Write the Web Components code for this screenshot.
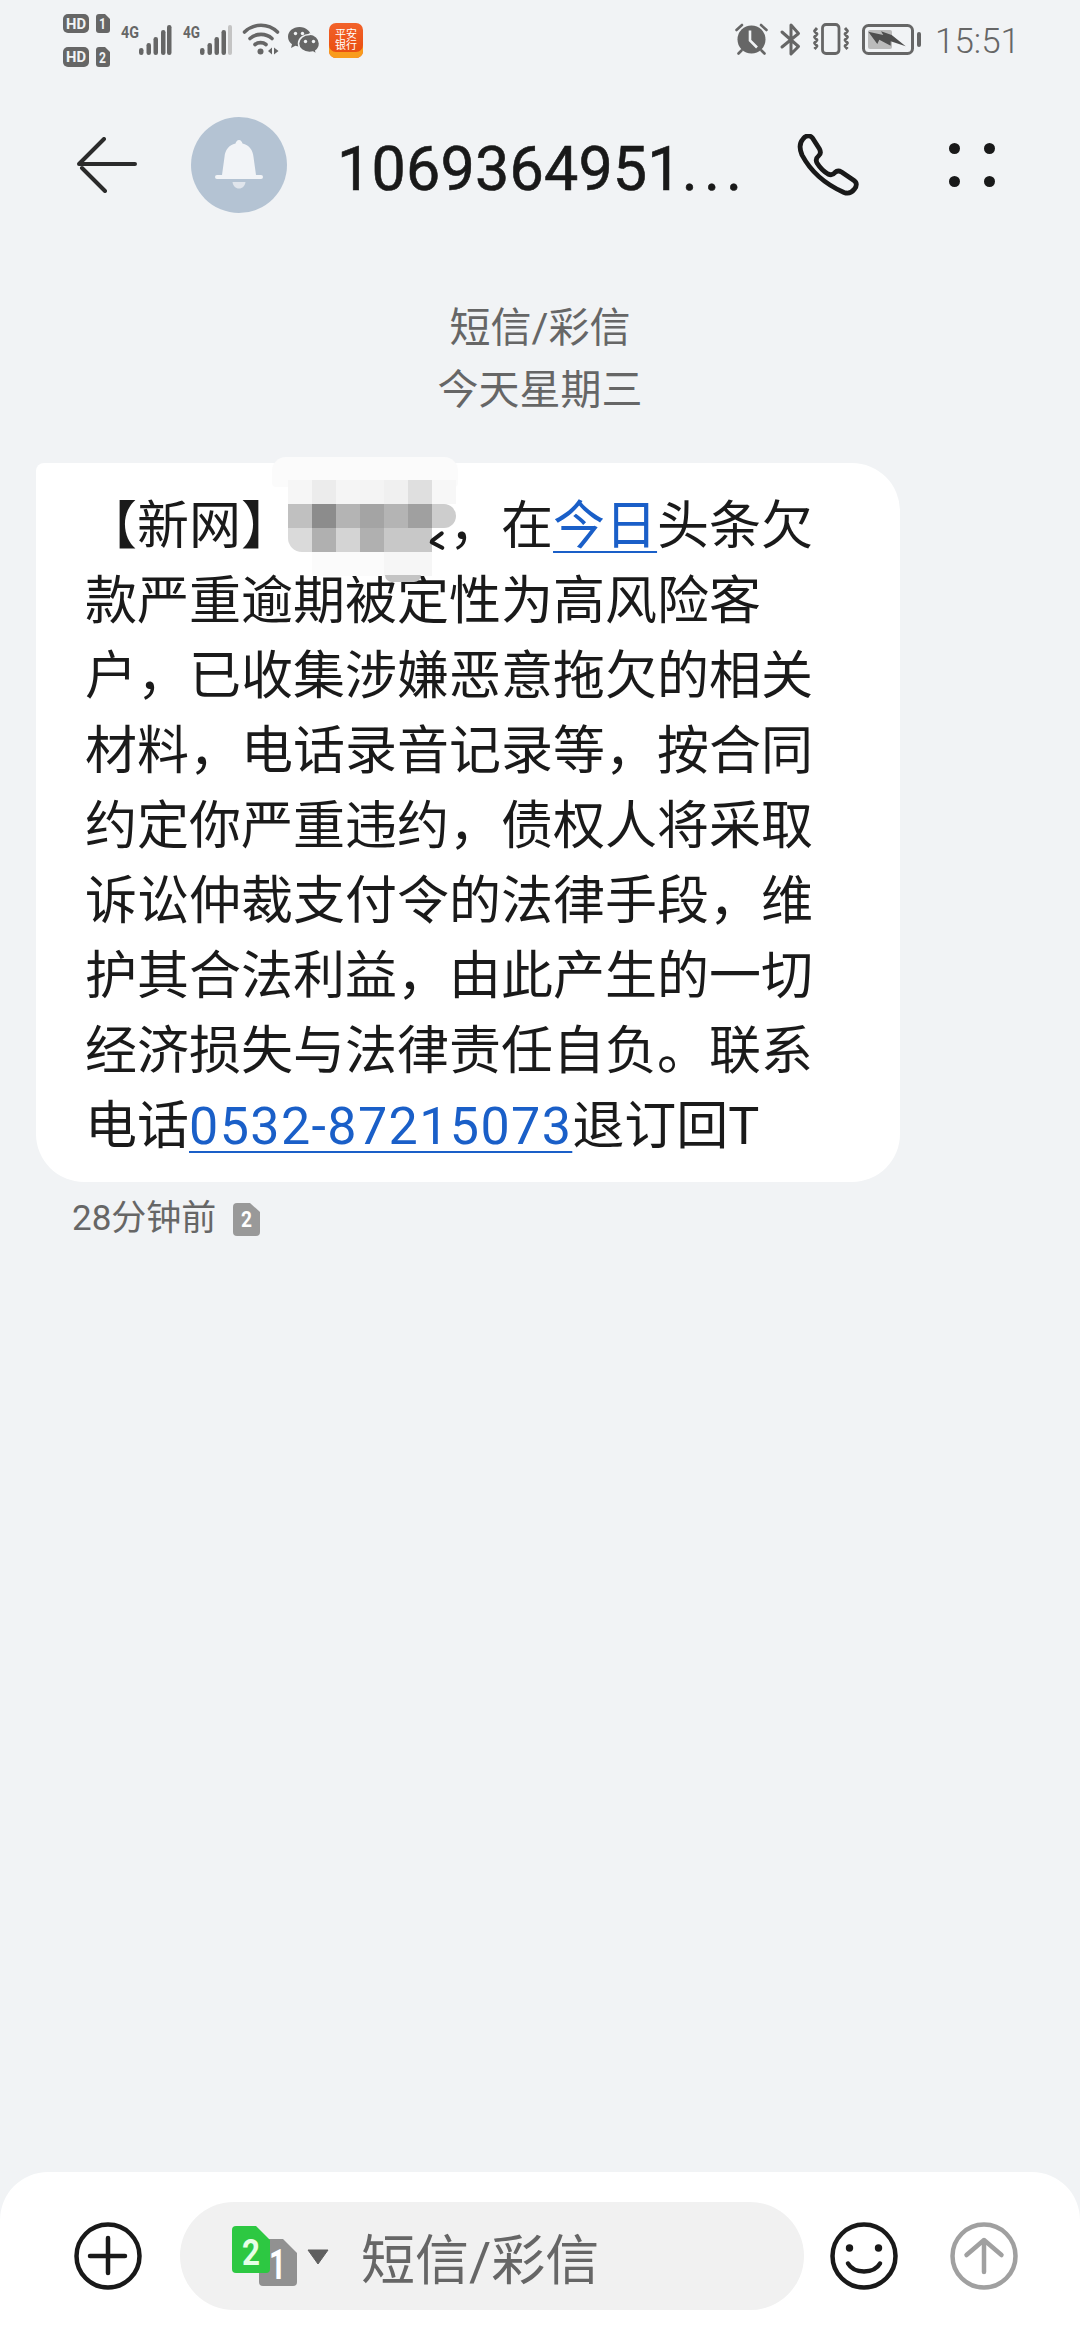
<!DOCTYPE html>
<html lang="zh-CN">
<head>
<meta charset="utf-8">
<title>短信</title>
<style>
  html, body { margin: 0; padding: 0; background: #f1f3f5; }
</style>
</head>
<body>

<template id="sms-app">
  <style>
    :host {
      display: flex;
      flex-direction: column;
      width: 1080px;
      height: 2340px;
      overflow: hidden;
      background: #f1f3f5;
      font-family: Roboto, "Noto Sans CJK SC", sans-serif;
    }
    .thread {
      flex: 1;
      display: flex;
      flex-direction: column;
      padding: 49px 36px 0;
    }
  </style>
  <slot name="top"></slot>
  <div class="thread"><slot></slot></div>
  <slot name="bottom"></slot>
</template>

<template id="sms-status-bar">
  <style>
    :host {
      display: flex;
      align-items: flex-start;
      justify-content: space-between;
      height: 82px;
      padding: 14px 60px 0 63px;
      box-sizing: border-box;
      color: #666;
    }
    .group { display: flex; align-items: flex-start; }
    svg { display: block; flex: none; overflow: visible; }
    svg text { font-family: Roboto, sans-serif; font-weight: 700; fill: #666; }
    .hd text { fill: #f1f3f5; }
    .signal { margin-left: 11px; margin-top: 10px; }
    .wifi { margin-left: 11px; margin-top: 8px; }
    .wechat { margin-left: 9px; margin-top: 13px; }
    .bank {
      width: 34px;
      height: 35px;
      margin-left: 9px;
      margin-top: 9px;
      padding: 5px 6px 0;
      border-radius: 7px;
      background: linear-gradient(#f2622a, #ea4f12 80%);
      box-shadow: inset 0 -6px 0 #f99c1c;
      color: #fff;
      font: 11px/11px "Noto Sans CJK SC", sans-serif;
      text-align: center;
      box-sizing: border-box;
    }
    .time {
      margin-left: 14px;
      margin-top: 8px;
      font: 300 35px/40px Roboto, sans-serif;
      color: #666;
    }
    .alarm { margin-top: 9px; }
    .bt { margin-left: 12px; margin-top: 9px; }
    .vib { margin-left: 11px; margin-top: 9px; }
    .batt { margin-left: 12px; margin-top: 10px; }
  </style>
  <div class="group">
    <svg class="hd" width="47" height="53" viewBox="0 0 47 53">
      <rect x="0" y="0" width="26" height="19" rx="5" fill="#666"/>
      <text x="3" y="15" font-size="15" textLength="20" lengthAdjust="spacingAndGlyphs">HD</text>
      <path d="M36 0h6l5 5v11q0 3-3 3h-8q-3 0-3-3V3q0-3 3-3z" fill="#666"/>
      <text x="36" y="15" font-size="14" textLength="7" lengthAdjust="spacingAndGlyphs">1</text>
      <rect x="0" y="33" width="26" height="20" rx="5" fill="#666"/>
      <text x="3" y="48" font-size="15" textLength="20" lengthAdjust="spacingAndGlyphs">HD</text>
      <path d="M36 33h6l5 5v12q0 3-3 3h-8q-3 0-3-3V36q0-3 3-3z" fill="#666"/>
      <text x="36" y="49" font-size="14" textLength="7" lengthAdjust="spacingAndGlyphs">2</text>
    </svg>
    <svg class="signal" width="50" height="32" viewBox="0 0 50 32">
      <text x="0" y="14" font-size="17" textLength="18" lengthAdjust="spacingAndGlyphs">4G</text>
      <rect x="18" y="24" width="4.5" height="7" rx="2.2" fill="#666"/>
      <rect x="25.5" y="19" width="4.5" height="12" rx="2.2" fill="#666"/>
      <rect x="32.5" y="13" width="4.5" height="18" rx="2.2" fill="#666"/>
      <rect x="40" y="6" width="4.5" height="25" rx="2.2" fill="#666"/>
      <rect x="46" y="1" width="4.5" height="30" rx="2.2" fill="#666"/>
    </svg>
    <svg class="signal" style="margin-left:12px" width="49" height="32" viewBox="0 0 49 32">
      <text x="0" y="14" font-size="17" textLength="17" lengthAdjust="spacingAndGlyphs">4G</text>
      <rect x="17" y="24" width="4.5" height="7" rx="2.2" fill="#666"/>
      <rect x="24.5" y="19" width="4.5" height="12" rx="2.2" fill="#666"/>
      <rect x="31.5" y="13" width="4.5" height="18" rx="2.2" fill="#666"/>
      <rect x="38.5" y="6" width="4.5" height="25" rx="2.2" fill="#666"/>
      <rect x="45" y="1" width="4" height="30" rx="2" fill="#c4c4c4"/>
    </svg>
    <svg class="wifi" width="36" height="33" viewBox="0 0 36 33" fill="none" stroke="#666" stroke-width="3.6" stroke-linecap="round">
      <path d="M1.5 10C11 1 25 1 34.5 10"/>
      <path d="M7 16.5C13 11 23 11 29 16.5"/>
      <path d="M12 22.5C15 20 20 20 23 22.5"/>
      <circle cx="17.5" cy="29.5" r="3" fill="#666" stroke="none"/>
      <path d="M29 25.5v7l-4-3.5zM31 25.5v7l4.500-3.500z" fill="#666" stroke="none"/>
    </svg>
    <svg class="wechat" width="32" height="28" viewBox="0 0 32 28">
      <path d="M11.500 0C5 0 0 4.300 0 9.800c0 3 1.500 5.600 4 7.400L3 21l4.400-2.200c1.300.4 2.700.6 4.100.6 6.500 0 11.500-4.300 11.500-9.600S18 0 11.500 0z" fill="#666"/>
      <path d="M21.500 7.500c-6 0-11 3.900-11 9s5 9 11 9c1.200 0 2.400-.2 3.500-.5l3.800 2.500-1-3.700c2.300-1.600 3.700-4.200 3.700-7.300 0-5.100-4.600-9.500-10-9.500z" fill="#666" stroke="#f1f3f5" stroke-width="1.500"/>
      <circle cx="7.500" cy="6.500" r="1.700" fill="#f1f3f5"/>
      <circle cx="14.500" cy="6.500" r="1.700" fill="#f1f3f5"/>
      <circle cx="17.500" cy="14.500" r="1.700" fill="#f1f3f5"/>
      <circle cx="25.500" cy="14.500" r="1.700" fill="#f1f3f5"/>
    </svg>
    <div class="bank">平安银行</div>
  </div>
  <div class="group">
    <svg class="alarm" width="33" height="32" viewBox="0 0 33 32">
      <circle cx="16.500" cy="16.500" r="14" fill="#666"/>
      <path d="M15 7.500v10l7 7" fill="none" stroke="#f1f3f5" stroke-width="2.600"/>
      <path d="M1.500 7L7 2M31.500 7L26 2M3.500 30.500l3-3M29.500 30.500l-3-3" fill="none" stroke="#666" stroke-width="2.600" stroke-linecap="round"/>
    </svg>
    <svg class="bt" width="21" height="33" viewBox="0 0 21 33" fill="none" stroke="#666" stroke-width="3" stroke-linejoin="round" stroke-linecap="round">
      <path d="M2 9L18.500 23.500 11 31V2l7.500 8.500L2 24"/>
    </svg>
    <svg class="vib" width="38" height="32" viewBox="0 0 38 32" fill="none" stroke="#666" stroke-width="2.800" stroke-linejoin="round">
      <rect x="10.500" y="1.500" width="16.500" height="29" rx="3.500"/>
      <path d="M5 5L2.500 8 5 11 2.500 14 5 17 2.500 20 5 23 2.500 26M33 5l2.500 3L33 11l2.500 3L33 17l2.500 3L33 23l2.500 3"/>
    </svg>
    <svg class="batt" width="59" height="31" viewBox="0 0 59 31">
      <rect x="1.500" y="1.500" width="49" height="28" rx="5" fill="none" stroke="#666" stroke-width="3"/>
      <rect x="6" y="6" width="24" height="19" rx="2" fill="#bbb"/>
      <path d="M6.300 7.700L21.300 11 19 7.300 29.700 11 43.700 22.300 28.700 17.300 28.700 21.700 17.300 15.700 15.300 20z" fill="#4f4f4f"/>
      <rect x="55" y="8" width="4" height="15" rx="2" fill="#666"/>
    </svg>
    <div class="time"><slot></slot></div>
  </div>
</template>

<template id="sms-header">
  <style>
    :host {
      display: flex;
      align-items: center;
      height: 166px;
      padding-left: 77px;
      box-sizing: border-box;
    }
    svg { display: block; flex: none; }
    .avatar {
      flex: none;
      display: flex;
      align-items: center;
      justify-content: center;
      width: 96px;
      height: 96px;
      margin-left: 54px;
      border-radius: 50%;
      background: #b4c3d3;
    }
    .title {
      width: 404px;
      margin-left: 50px;
      padding-top: 8px;
      font: 400 61px/70px Roboto, sans-serif;
      -webkit-text-stroke: 0.6px #191919;
      color: #191919;
      white-space: nowrap;
      letter-spacing: 0.2px;
    }
    .call { margin-left: 56px; }
    .more {
      margin-left: 90px;
      display: grid;
      grid-template-columns: 11px 11px;
      gap: 22px 24px;
    }
    .more i { width: 11px; height: 11px; border-radius: 50%; background: #191919; }
  </style>
  <svg width="60" height="56" viewBox="0 0 60 56" fill="none" stroke="#2b2b2b" stroke-width="4" stroke-linecap="round" stroke-linejoin="round">
    <path d="M58 27H2L27 2M5 31L28 54"/>
  </svg>
  <div class="avatar">
    <svg width="48" height="50" viewBox="0 0 48 50" fill="#f2f4f7">
      <path d="M24 0c2 0 3 2 3.500 3.500C34 5 38 10 38.500 17L41 35h5q2 0 2 2t-2 2H2q-2 0-2-2t2-2h5l2.500-18C10 10 14 5 20.500 3.500 21 2 22 0 24 0z"/>
      <path d="M17.500 42h13c-.6 4-3 6.500-6.500 6.500s-5.900-2.500-6.500-6.500z" opacity=".7"/>
    </svg>
  </div>
  <div class="title"><slot></slot></div>
  <svg class="call" width="62" height="62" viewBox="0 0 62 62" fill="none" stroke="#191919" stroke-width="4.800" stroke-linejoin="round">
    <path d="M6 5C9 1 13 1 15.500 4L22.500 15C24 18 24 20 21.500 22 19 24 18.500 26 20 29 22.500 33 26 37 31 40 34 41.500 36 41 38 38.500 40 36.500 42 36.500 44.500 38L57 46.500C60 48.500 60 52 57.500 55 54.500 59 51 60 47 58.500 30 51 14 38 5 21 2 14 2 9.500 6 5Z"/>
  </svg>
  <div class="more"><i></i><i></i><i></i><i></i></div>
</template>

<template id="sms-day-label">
  <style>
    :host {
      display: block;
      text-align: center;
      font-size: 41px;
      line-height: 62px;
      color: #666;
    }
  </style>
  <slot></slot>
</template>

<template id="sms-bubble">
  <style>
    :host {
      display: block;
      position: relative;
      width: 864px;
      margin-top: 42px;
      padding: 26px 40px 18px 49px;
      box-sizing: border-box;
      background: #fff;
      border-radius: 8px 48px 48px 48px;
      font-size: 52px;
      line-height: 75px;
      color: #1a1a1a;
    }
  </style>
  <slot></slot>
</template>

<template id="sms-link"><style>
    :host {
      display: inline;
      color: #1a5fc8;
      text-decoration: underline;
      text-decoration-thickness: 2px;
      text-underline-offset: 7px;
    }
  </style><slot></slot></template>

<template id="sms-redacted">
  <style>
    :host { display: inline-block; width: 156px; height: 1px; }
  </style>
</template>

<template id="sms-mosaic">
  <style>
    :host {
      position: absolute;
      left: 236px;
      top: -6px;
      width: 186px;
      height: 125px;
    }
    .band {
      position: absolute;
      left: 0;
      top: 0;
      width: 186px;
      height: 30px;
      border-radius: 14px 14px 4px 4px;
      background: #fbfbfb;
    }
    .tiles {
      position: absolute;
      left: 16px;
      top: 23px;
      display: grid;
      grid-template-columns: repeat(7, 24px);
      grid-auto-rows: 24px;
    }
    .tiles i { display: block; }
    .dregs {
      position: absolute;
      left: 113px;
      top: 118px;
      width: 36px;
      height: 7px;
      border-radius: 0 0 12px 12px;
      background: #c4c4c4;
    }
    .tick {
      position: absolute;
      left: 157px;
      width: 16px;
      height: 4px;
      background: #1a1a1a;
      border-radius: 2px;
    }
  </style>
  <div class="band"></div>
  <div class="tiles"></div>
  <div class="dregs"></div>
  <div class="tick" style="top:78px;transform:rotate(-38deg)"></div>
  <div class="tick" style="top:86px;transform:rotate(28deg)"></div>
</template>

<template id="sms-meta">
  <style>
    :host {
      display: flex;
      align-items: center;
      margin: 17px 0 0 36px;
      font-size: 35px;
      line-height: 40px;
      color: #666;
    }
    svg { display: block; margin-left: 17px; }
    text { font-family: Roboto, sans-serif; font-weight: 700; fill: #fff; }
  </style>
  <slot></slot>
  <svg width="27" height="33" viewBox="0 0 27 33">
    <path d="M4 0h13l10 9v20q0 4-4 4H4q-4 0-4-4V4q0-4 4-4z" fill="#999"/>
    <text x="8" y="24" font-size="22" textLength="11" lengthAdjust="spacingAndGlyphs">2</text>
  </svg>
</template>

<template id="sms-composer">
  <style>
    :host {
      display: flex;
      align-items: center;
      height: 168px;
      padding: 0 60px 0 72px;
      box-sizing: border-box;
      background: #fff;
      border-radius: 48px 48px 0 0;
    }
    svg { display: block; flex: none; overflow: visible; }
    .pill {
      flex: 1;
      display: flex;
      align-items: center;
      height: 108px;
      margin: 0 24px 0 36px;
      padding-left: 52px;
      border-radius: 54px;
      background: #f1f1f1;
      font-size: 54px;
      color: #666;
    }
    .pick { font-family: Roboto, sans-serif; font-weight: 700; }
    .hint { margin-left: 32px; }
    .send { margin-left: 48px; }
  </style>
  <svg width="72" height="72" viewBox="0 0 72 72" fill="none" stroke="#191919" stroke-width="4.500" stroke-linecap="round">
    <circle cx="36" cy="36" r="31.500"/>
    <path d="M18 36h35M36 18v35"/>
  </svg>
  <div class="pill">
    <svg class="pick" width="65" height="60" viewBox="0 0 65 60">
      <path d="M31 13h20l14 14v29q0 4-4 4H31q-4 0-4-4V17q0-4 4-4z" fill="#919191"/>
      <text x="37" y="53" font-size="42" fill="#fff" textLength="17" lengthAdjust="spacingAndGlyphs">1</text>
      <path d="M4 0h20l14 14v29q0 4-4 4H4q-4 0-4-4V4q0-4 4-4z" fill="#2dc842"/>
      <text x="10" y="39" font-size="37" fill="#e6ffe6" textLength="18" lengthAdjust="spacingAndGlyphs">2</text>
    </svg>
    <svg style="margin-left:10px" width="22" height="15" viewBox="0 0 22 15">
      <path d="M1 1h20L11 15z" fill="#5f5f5f" stroke="#5f5f5f" stroke-linejoin="round"/>
    </svg>
    <div class="hint"><slot></slot></div>
  </div>
  <svg width="72" height="72" viewBox="0 0 72 72" fill="none" stroke="#191919" stroke-width="4.500" stroke-linecap="round">
    <circle cx="36" cy="36" r="31.500"/>
    <path d="M20 43.500C26 54 46 54 52 43.500"/>
    <circle cx="21.500" cy="28" r="3.700" fill="#191919" stroke="none"/>
    <circle cx="50.500" cy="28" r="3.700" fill="#191919" stroke="none"/>
  </svg>
  <svg class="send" width="72" height="72" viewBox="0 0 72 72" fill="none" stroke="#a0a0a0" stroke-width="4.500" stroke-linecap="round" stroke-linejoin="round">
    <circle cx="36" cy="36" r="31.500"/>
    <path d="M36 52V20M18.500 35L36 20 53.500 35"/>
  </svg>
</template>

<sms-app>
  <sms-status-bar slot="top">15:51</sms-status-bar>
  <sms-header slot="top">1069364951<span style="letter-spacing:6px">...</span></sms-header>
  <sms-day-label>短信/彩信<br>今天星期三</sms-day-label>
  <sms-bubble>
    <sms-mosaic></sms-mosaic>
    【新网】<sms-redacted></sms-redacted>，在<sms-link>今日</sms-link>头条欠<br>
    款严重逾期被定性为高风险客<br>
    户，已收集涉嫌恶意拖欠的相关<br>
    材料，电话录音记录等，按合同<br>
    约定你严重违约，债权人将采取<br>
    诉讼仲裁支付令的法律手段，维<br>
    护其合法利益，由此产生的一切<br>
    经济损失与法律责任自负。联系<br>
    电话<sms-link style="letter-spacing:1.4px">0532-87215073</sms-link>退订回T
  </sms-bubble>
  <sms-meta>28分钟前</sms-meta>
  <sms-composer slot="bottom">短信/彩信</sms-composer>
</sms-app>

<script>
  (() => {
    const attach = (el, id) => {
      const shadowRoot = el.attachShadow({mode: 'open'});
      shadowRoot.appendChild(document.getElementById(id).content.cloneNode(true));
      return shadowRoot;
    };

    // elements that are only a template and a shadow root
    ['sms-app', 'sms-status-bar', 'sms-header', 'sms-day-label', 'sms-bubble',
     'sms-link', 'sms-redacted', 'sms-meta', 'sms-composer'].forEach((name) => {
      window.customElements.define(name, class extends HTMLElement {
        constructor() {
          super();
          attach(this, name);
        }
      });
    });

    // the blurred-out sender name, row by row from the top left
    const greys = [
      'f6f6f6', 'ececec', 'f5f5f5', 'f4f4f4', 'f0f0f0', 'dfdfdf', 'f7f7f7',
      'c0c0c0', '8c8c8c', 'b4b4b4', 'a4a4a4', 'b4b4b4', 'a0a0a0', 'cdcdcd',
      'dadada', 'b0b0b0', 'd4d4d4', 'b0b0b0', 'c8c8c8', 'c8c8c8', null,
      null, 'fbfbfb', 'fbfbfb', 'fbfbfb', 'f6f6f6', 'f6f6f6', null
    ];

    window.customElements.define('sms-mosaic', class extends HTMLElement {
      constructor() {
        super();
        const shadowRoot = attach(this, 'sms-mosaic');
        const tiles = shadowRoot.querySelector('.tiles');
        greys.forEach((grey, i) => {
          const tile = document.createElement('i');
          if (grey) tile.style.background = '#' + grey;
          if (i === 14) tile.style.borderBottomLeftRadius = '14px';
          if (i === 13) tile.style.borderRadius = '0 12px 12px 0';
          tiles.appendChild(tile);
        });
      }
    });
  })()
</script>
</body>
</html>
